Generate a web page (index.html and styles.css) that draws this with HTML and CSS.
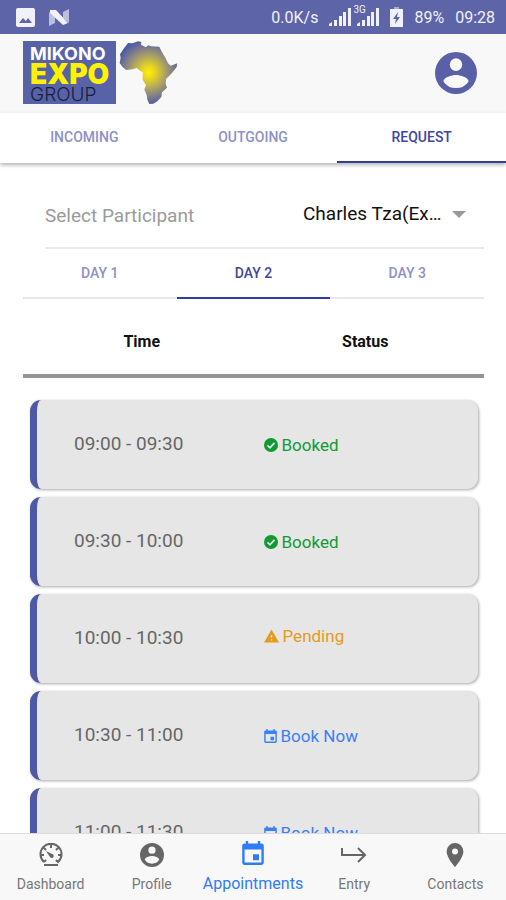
FILE: index.html
```html
<!DOCTYPE html>
<html lang="en">
<head>
    <meta charset="UTF-8">
    <meta name="viewport" content="width=device-width, initial-scale=1.0">
    <title>Appointments - Mikono Expo Group</title>
    <link rel="stylesheet" href="styles.css">
</head>
<body>
    <!-- icons used more than once -->
    <svg class="sprite" width="0" height="0" aria-hidden="true">
        <symbol id="icon-account" viewBox="2 2 20 20">
            <path d="M12 2a10 10 0 1 0 0 20 10 10 0 0 0 0-20zm0 3a3 3 0 1 1 0 6 3 3 0 0 1 0-6zm0 14.2a7.2 7.2 0 0 1-6-3.2c0-2 4-3.1 6-3.1s6 1.100 6 3.100a7.200 7.200 0 0 1-6 3.200z"/>
        </symbol>
        <symbol id="icon-event" viewBox="3 1 18 20">
            <path d="M17 12h-5v5h5zM16 1v2H8V1H6v2H5a2 2 0 0 0-2 2v14c0 1.100.9 2 2 2h14a2 2 0 0 0 2-2V5a2 2 0 0 0-2-2h-1V1zm3 18H5V8h14z"/>
        </symbol>
        <symbol id="icon-check" viewBox="0 0 20 20">
            <circle cx="10" cy="10" r="10"/>
            <path d="M5 10.500l3.500 3.500 6.500-7" fill="none" stroke="#e6e6e6" stroke-width="2.400"/>
        </symbol>
        <symbol id="icon-warning" viewBox="1 2 22 19">
            <path d="M1 21h22L12 2zm12-3h-2v-2h2zm0-4h-2v-4h2z"/>
        </symbol>
        <symbol id="icon-signal" viewBox="0 0 22 18">
            <path d="M0 18v-2l3-2v4zM5 12h3v6H5zM10 8h3v10h-3zM14 4h3v14h-3zM19 0h3v18h-3z"/>
        </symbol>
    </svg>

    <div class="status-bar">
        <div class="status-group">
            <svg width="19" height="19" viewBox="0 0 19 19">
                <path fill-rule="evenodd" d="M2 0h15a2 2 0 0 1 2 2v15a2 2 0 0 1-2 2H2a2 2 0 0 1-2-2V2a2 2 0 0 1 2-2zM3 15h13l-4-5-2 3-3-3z"/>
            </svg>
            <svg width="20" height="17" viewBox="0 0 20 17">
                <path opacity=".65" d="M0 3l6 5v6l-6 3zM20 0v14l-6-5V3z"/>
                <path d="M1 1h6l12 13-5 2L1 4z"/>
            </svg>
        </div>
        <div class="status-group">
            <span>0.0K/s</span>
            <span class="signals">
                <svg width="22" height="18"><use href="#icon-signal"/></svg>
                <span class="network">3G</span>
                <svg width="22" height="18"><use href="#icon-signal"/></svg>
            </span>
            <svg width="13" height="20" viewBox="0 0 13 20">
                <path opacity=".5" d="M4 0h5v2H4z"/>
                <path fill-rule="evenodd" d="M0 2h13v18H0zM8 5l-5 7h3l-1 5 5-7H7z"/>
            </svg>
            <span>89%</span>
            <span>09:28</span>
        </div>
    </div>

    <header class="header">
        <a href="#" class="logo" aria-label="Mikono Expo Group">
            <span class="logo-box">
                <span class="logo-mikono">MIKONO</span>
                <span class="logo-expo">EXPO</span>
                <span class="logo-group">GROUP</span>
            </span>
            <svg width="59" height="63" viewBox="21 14 177 189">
                <defs>
                    <radialGradient id="africa" gradientUnits="userSpaceOnUse" cx="110" cy="108" r="98">
                        <stop offset="0" stop-color="#fff000"/>
                        <stop offset=".15" stop-color="#f0dc18"/>
                        <stop offset=".6" stop-color="#9a9475"/>
                        <stop offset="1" stop-color="#4f5aa5"/>
                    </radialGradient>
                </defs>
                <path fill="url(#africa)" d="M48 20L62 21 78 15 88 17 87 25 102 33 108 27 118 30 142 31 148 44 160 64 168 81 176 88 196 81 194 92 178 112 162 128 161 142 165 154 150 168 148 182 136 195 124 202 112 203 106 190 104 176 97 160 102 146 92 131 92 108 86 105 74 95 62 99 42 101 31 91 23 80 26 64 24 54 36 36z"/>
            </svg>
        </a>
        <button class="account" aria-label="Account">
            <svg width="42" height="42"><use href="#icon-account"/></svg>
        </button>
    </header>

    <div class="tabs main-tabs">
        <button>INCOMING</button>
        <button>OUTGOING</button>
        <button class="active">REQUEST</button>
    </div>

    <main class="content">
        <div class="participant">
            <label for="participant">Select Participant</label>
            <div class="select-wrap">
                <select id="participant">
                    <option>Charles Tza(Ex…</option>
                </select>
                <svg width="14" height="7" viewBox="0 0 14 7"><path d="M0 0h14L7 7z"/></svg>
            </div>
        </div>

        <div class="tabs day-tabs">
            <button>DAY 1</button>
            <button class="active">DAY 2</button>
            <button>DAY 3</button>
        </div>

        <table class="slots">
            <thead>
                <tr>
                    <th>Time</th>
                    <th>Status</th>
                </tr>
            </thead>
            <tbody>
                <tr>
                    <td>09:00 - 09:30</td>
                    <td><span class="slot booked"><svg width="14" height="14"><use href="#icon-check"/></svg>Booked</span></td>
                </tr>
                <tr>
                    <td>09:30 - 10:00</td>
                    <td><span class="slot booked"><svg width="14" height="14"><use href="#icon-check"/></svg>Booked</span></td>
                </tr>
                <tr>
                    <td>10:00 - 10:30</td>
                    <td><span class="slot pending"><svg width="15" height="14"><use href="#icon-warning"/></svg>Pending</span></td>
                </tr>
                <tr>
                    <td>10:30 - 11:00</td>
                    <td><a href="#" class="slot book"><svg width="13" height="14"><use href="#icon-event"/></svg>Book Now</a></td>
                </tr>
                <tr>
                    <td>11:00 - 11:30</td>
                    <td><a href="#" class="slot book"><svg width="13" height="14"><use href="#icon-event"/></svg>Book Now</a></td>
                </tr>
            </tbody>
        </table>
    </main>

    <nav class="bottom-nav">
        <a href="#">
            <svg width="24" height="24" viewBox="0 0 24 24">
                <path fill="none" stroke="currentColor" stroke-width="2" d="M5 19a10.500 10.500 0 1 1 14 0l-2-2M5 19l2-2M2 12h3M19 12h3M12 1v4M5 5l2 2M19 5l-2 2"/>
                <path d="M7 8l6 3a2 2 0 1 1-2 3zM5 21h14v2H5z"/>
            </svg>
            Dashboard
        </a>
        <a href="#">
            <svg width="24" height="24"><use href="#icon-account"/></svg>
            Profile
        </a>
        <a href="#" class="active">
            <svg width="22" height="24"><use href="#icon-event"/></svg>
            Appointments
        </a>
        <a href="#">
            <svg width="26" height="24" viewBox="0 0 26 24">
                <path fill="none" stroke="currentColor" stroke-width="2" d="M1 5v7h23M17 5l7 7-7 7"/>
            </svg>
            Entry
        </a>
        <a href="#">
            <svg width="18" height="24" viewBox="5 2 14 20">
                <path d="M12 2a7 7 0 0 0-7 7c0 5.200 7 13 7 13s7-7.800 7-13a7 7 0 0 0-7-7zm0 9.500a2.500 2.500 0 1 1 0-5 2.500 2.500 0 0 1 0 5z"/>
            </svg>
            Contacts
        </a>
    </nav>
</body>
</html>
```
FILE: styles.css
```css
* {
    box-sizing: border-box;
}
body {
    margin: 0;
    height: 100vh;
    display: flex;
    flex-direction: column;
    font-family: Roboto, sans-serif;
    background-color: #fff;
}
button {
    border: none;
    background: none;
    padding: 0;
    font-family: inherit;
    cursor: pointer;
}
a {
    text-decoration: none;
}
svg {
    fill: currentColor;
    flex-shrink: 0;
}
.sprite {
    position: absolute;
}

/* Phone status bar */
.status-bar {
    display: flex;
    justify-content: space-between;
    align-items: center;
    height: 34px;
    flex-shrink: 0;
    padding: 0 11px 0 16px;
    background-color: #5d64a7;
    color: #f0f1fb;
    font-size: 16px;
}
.status-group {
    display: flex;
    align-items: center;
    gap: 11px;
}
.status-group:first-child {
    gap: 14px;
}
.signals {
    position: relative;
    display: flex;
    gap: 6px;
}
.network {
    position: absolute;
    top: -3px;
    left: 24px;
    font-size: 10px;
    line-height: 10px;
}

/* Header */
.header {
    display: flex;
    justify-content: space-between;
    align-items: center;
    flex-shrink: 0;
    padding: 7px 29px 9px 23px;
    background-color: #f8f8f8;
}
.logo {
    display: flex;
    align-items: center;
    gap: 3px;
}
.logo-box {
    display: flex;
    flex-direction: column;
    width: 93px;
    height: 63px;
    padding: 3px 0 0 7px;
    background-color: #5862a6;
    font-family: Inter, sans-serif;
}
.logo-mikono {
    font-size: 18px;
    font-weight: 700;
    line-height: 20px;
    color: #fff;
}
.logo-expo {
    font-size: 28px;
    font-weight: 900;
    line-height: 21px;
    color: #fff200;
}
.logo-group {
    font-size: 19px;
    font-weight: 300;
    line-height: 20px;
    color: #1b1d3a;
}
.account {
    height: 42px;
    color: #5a60a8;
}

/* Tabs */
.tabs {
    display: flex;
    flex-shrink: 0;
}
.tabs button {
    flex: 1;
    height: 50px;
    border-bottom: 2px solid transparent;
    font-size: 14px;
    font-weight: 500;
    color: #8f90c8;
}
.main-tabs {
    position: relative;
    background-color: #fff;
    box-shadow: 0 2px 4px rgba(0, 0, 0, 0.3);
}
.day-tabs button {
    border-bottom-color: #e8e8e8;
}
.tabs .active {
    color: #3f46a0;
    border-bottom-color: #303f9f;
}

/* Content */
.content {
    flex: 1;
    min-height: 0;
    overflow-y: auto;
    scrollbar-width: none;
    padding: 18px 22px 0 23px;
}
.participant {
    display: flex;
    justify-content: space-between;
    align-items: center;
    height: 68px;
    margin-left: 22px;
    padding-right: 18px;
    border-bottom: 2px solid #e8e8e8;
    font-size: 19px;
}
.participant label {
    padding-top: 2px;
    color: #9a9a9a;
}
.select-wrap {
    display: flex;
    align-items: center;
    gap: 10px;
    color: #999;
}
.participant select {
    appearance: none;
    border: none;
    padding: 0 0 2px;
    background: none;
    font: inherit;
    color: #111;
}

/* Time slots */
.slots,
.slots thead,
.slots tbody {
    display: block;
}
.slots tr {
    display: grid;
    grid-template-columns: 1fr 1fr;
    align-items: center;
}
.slots thead {
    padding: 32px 7px 22px;
    border-bottom: 4px solid #959595;
}
.slots th {
    padding: 0;
    font-size: 16px;
    line-height: 21px;
    color: #111;
}
.slots tbody {
    padding: 22px 6px 8px 7px;
}
.slots tbody tr {
    height: 89px;
    margin-bottom: 8px;
    border-left: 7px solid #4f58a5;
    border-radius: 11px;
    background-color: #e6e6e6;
    box-shadow: 1px 1px 3px rgba(0, 0, 0, 0.35);
}
.slots td {
    padding: 0 0 2px 37px;
    font-size: 19px;
    color: #666;
}
.slots td + td {
    padding: 0 0 0 6px;
}
.slot {
    display: flex;
    align-items: center;
    gap: 4px;
    font-size: 17px;
}
.booked {
    color: #119a33;
}
.pending {
    padding-bottom: 6px;
    color: #e59a1c;
}
.book {
    color: #3880f5;
}

/* Bottom navigation */
.bottom-nav {
    display: grid;
    grid-template-columns: repeat(5, 1fr);
    flex-shrink: 0;
    height: 67px;
    border-top: 1px solid #dcdcdc;
    background-color: #f8f8f8;
}
.bottom-nav a {
    display: flex;
    flex-direction: column;
    align-items: center;
    gap: 7px;
    padding-top: 9px;
    font-size: 14px;
    line-height: 20px;
    color: #777;
}
.bottom-nav svg {
    color: #666;
}
.bottom-nav .active,
.bottom-nav .active svg {
    color: #2f7cf6;
}
.bottom-nav .active {
    gap: 9px;
    padding-top: 7px;
    font-size: 16px;
}
```
